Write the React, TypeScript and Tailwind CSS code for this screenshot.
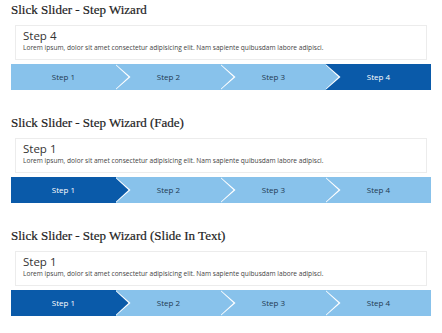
const steps = ["Step 1", "Step 2", "Step 3", "Step 4"];

const lorem =
  "Lorem ipsum, dolor sit amet consectetur adipisicing elit. Nam sapiente quibusdam labore adipisci.";

function StepBar({ active }: { active: number }) {
  return (
    <div className="mt-[4px] flex h-[26px] w-full">
      {steps.map((label, i) => {
        const isActive = i === active;
        const isLast = i === steps.length - 1;
        return (
          <div
            key={label}
            className={
              "relative flex flex-1 items-center justify-center text-[8px] " +
              (isActive ? "bg-[#0a5aa9] text-white" : "bg-[#88c2eb] text-[#1f3a52]")
            }
            style={{ zIndex: steps.length - i }}
          >
            <span className="relative z-20">{label}</span>
            {!isLast && (
              <>
                <div className="absolute left-[calc(100%-0.5px)] top-0 z-10 h-full w-[15px] bg-white [clip-path:polygon(0_0,100%_50%,0_100%)]" />
                <div
                  className={
                    "absolute left-[calc(100%-1.5px)] top-0 z-10 h-full w-[14px] [clip-path:polygon(0_0,100%_50%,0_100%)] " +
                    (isActive ? "bg-[#0a5aa9]" : "bg-[#88c2eb]")
                  }
                />
              </>
            )}
          </div>
        );
      })}
    </div>
  );
}

function Wizard({ title, active }: { title: string; active: number }) {
  return (
    <section>
      <h2 className="text-[13px] leading-[18px] text-[#222] [-webkit-text-stroke:0.2px_#222] [font-family:'Liberation_Serif',serif]">
        {title}
      </h2>
      <div className="mx-[4px] mt-[6px] h-[35px] border border-[#ececec] bg-white px-[7px] pt-[3px]">
        <p className="text-[11.5px] leading-[14px] text-[#333]">{steps[active]}</p>
        <p className="text-[6.6px] leading-[9px] text-[#444]">{lorem}</p>
      </div>
      <StepBar active={active} />
    </section>
  );
}

export default function App() {
  return (
    <div className="flex min-h-[333px] w-[442px] flex-col gap-[24px] bg-white px-[11px] pt-[1px] [font-family:'Open_Sans',sans-serif]">
      <Wizard title="Slick Slider - Step Wizard" active={3} />
      <Wizard title="Slick Slider - Step Wizard (Fade)" active={0} />
      <Wizard title="Slick Slider - Step Wizard (Slide In Text)" active={0} />
    </div>
  );
}
